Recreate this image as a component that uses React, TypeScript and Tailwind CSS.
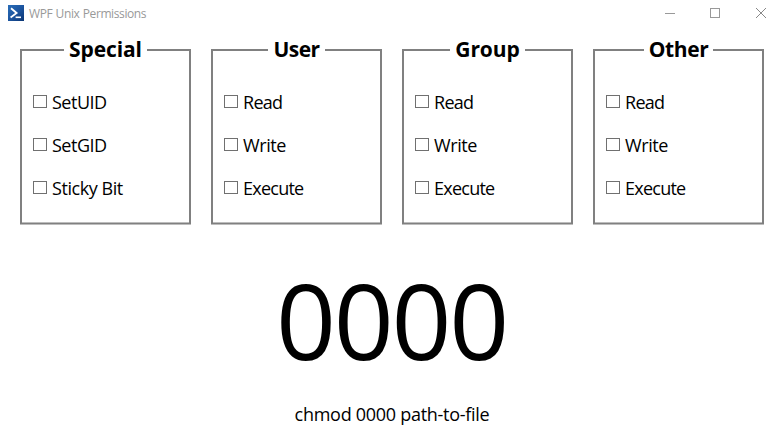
const permissions = [
  { label: "Read", spacing: "tracking-[-0.7px]" },
  { label: "Write", spacing: "tracking-[-0.4px]" },
  { label: "Execute", spacing: "tracking-[-0.75px]" },
];

const groups = [
  {
    title: "Special",
    gap: "w-[83px]",
    spacing: "tracking-[-0.1px]",
    items: [
      { label: "SetUID", spacing: "tracking-[-0.5px]" },
      { label: "SetGID", spacing: "tracking-[-0.5px]" },
      { label: "Sticky Bit", spacing: "tracking-[-0.45px]" },
    ],
  },
  { title: "User", gap: "w-[57px]", spacing: "tracking-[-0.6px]", items: permissions },
  { title: "Group", gap: "w-[75px]", spacing: "tracking-[-0.1px]", items: permissions },
  { title: "Other", gap: "w-[69px]", spacing: "tracking-[-0.4px]", items: permissions },
];

function ShellIcon() {
  return (
    <svg width="16" height="16" viewBox="0 0 16 16" className="block">
      <defs>
        <linearGradient id="shell" x1="0" y1="0" x2="1" y2="1">
          <stop offset="0" stopColor="#2a6db8" />
          <stop offset="0.5" stopColor="#1c55a0" />
          <stop offset="1" stopColor="#0b3573" />
        </linearGradient>
      </defs>
      <rect width="16" height="16" fill="url(#shell)" />
      <path d="M3 3.2L8.6 8L2.6 12.4" fill="none" stroke="#fff" strokeWidth="1.8" />
      <path d="M7.6 12.3H13" stroke="#fff" strokeWidth="1.6" />
    </svg>
  );
}

function TitleBar() {
  return (
    <header className="flex h-[26px] items-center pl-2">
      <ShellIcon />
      <span className="mt-0.5 ml-[5px] text-[12px] leading-4 tracking-[-0.4px] [word-spacing:0.6px] whitespace-nowrap text-[#999]">
        WPF Unix Permissions
      </span>
      <div className="ml-auto flex items-center pr-[17px]">
        <svg width="10" height="10" className="mr-[35px] block" stroke="#999"><path d="M0 5.5H10" /></svg>
        <svg width="10" height="10" className="mr-[36px] block" fill="none" stroke="#999"><rect x=".5" y=".5" width="9" height="9" /></svg>
        <svg width="10" height="10" className="block" stroke="#888"><path d="M0 0L10 10M10 0L0 10" /></svg>
      </div>
    </header>
  );
}

export default function App() {
  return (
    <div className="flex h-[440px] w-[783px] flex-col overflow-hidden bg-white font-['Open_Sans','Noto_Sans',sans-serif] text-black">
      <TitleBar />
      <main className="flex flex-col items-center">
        <div className="mt-[12px] flex gap-5 self-start pl-5">
          {groups.map((g) => (
            <fieldset
              key={g.title}
              className="h-[186px] w-[171px] border-2 border-b border-[#808080] shadow-[inset_0_-1px_0_#bdbdbd,0_1px_0_#bdbdbd]"
            >
              <legend className={`mx-auto flex h-6 items-center justify-center pb-0.5 text-[21px] leading-[22px] font-bold ${g.gap}`}>
                <span className={g.spacing}>{g.title}</span>
              </legend>
              <div className="flex flex-col gap-[19px] pt-[28px] pl-[11px]">
                {g.items.map((item) => (
                  <label key={item.label} className="flex h-6 items-center">
                    <input type="checkbox" className="mb-px h-[13px] w-[14px] appearance-none border border-[#707070] bg-white" />
                    <span className={`ml-[5px] text-[18px] leading-6 whitespace-nowrap ${item.spacing}`}>{item.label}</span>
                  </label>
                ))}
              </div>
            </fieldset>
          ))}
        </div>
        <output className="mt-[36px] block h-[120px] text-[105px] leading-[120px] tracking-[-2.3px]">0000</output>
        <p className="mt-[22px] pl-px text-[18px] leading-6 tracking-[-0.28px]">chmod 0000 path-to-file</p>
      </main>
    </div>
  );
}
